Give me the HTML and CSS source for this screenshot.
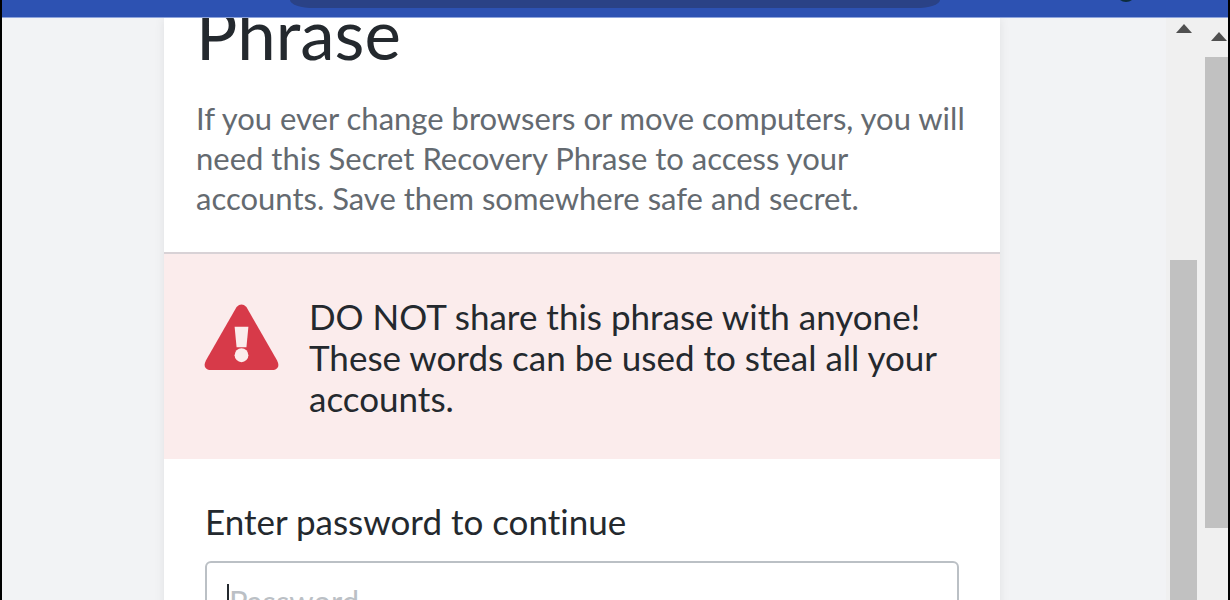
FILE: index.html
```html
<!DOCTYPE html>
<html lang="en">
<head>
<meta charset="utf-8">
<title>Secret Recovery Phrase</title>
<link rel="stylesheet" href="styles.css">
</head>
<body>
<div class="window">
  <header class="toolbar">
    <div class="address"></div>
    <div class="avatar"></div>
  </header>
  <div class="viewport">
    <main class="page">
      <section class="card">
        <div class="intro">
          <h1 class="title">Phrase</h1>
          <p class="lead">If you ever change browsers or move computers, you will<br>need this Secret Recovery Phrase to access your<br>accounts. Save them somewhere safe and secret.</p>
        </div>
        <div class="warning" role="alert">
          <svg class="warning-icon" viewBox="0 0 76 68" aria-hidden="true">
            <path d="M33 3Q38 -2 43 3L74 57Q78 65 71 67H5Q-2 65 2 57Z" fill="#d73a49"/>
            <path d="M31 23H45L43 44H33Z" fill="#fbecec"/>
            <circle cx="38" cy="52" r="7" fill="#fbecec"/>
          </svg>
          <p class="warning-text">DO NOT share this phrase with anyone!<br>These words can be used to steal all your<br>accounts.</p>
        </div>
        <form class="form">
          <label class="label" for="password">Enter password to continue</label>
          <div class="field">
            <input class="input" id="password" type="password" placeholder="Password">
            <span class="caret"></span>
          </div>
        </form>
      </section>
    </main>
    <div class="bar bar-inner">
      <svg class="arrow" viewBox="0 0 16 9" aria-hidden="true"><path d="M8 0L16 9H0Z" fill="#505050"/></svg>
      <div class="thumb"></div>
    </div>
    <div class="bar bar-outer">
      <svg class="arrow" viewBox="0 0 16 9" aria-hidden="true"><path d="M8 0L16 9H0Z" fill="#505050"/></svg>
      <div class="thumb"></div>
    </div>
  </div>
</div>
</body>
</html>
```
FILE: styles.css
```css
* { box-sizing: border-box; }
body {
  margin: 0;
  font-family: Lato, "Liberation Sans", sans-serif;
  font-variant-ligatures: none;
  color: #24292e;
}
.window {
  display: flex;
  flex-direction: column;
  height: 100vh;
  overflow: hidden;
  border: solid #000;
  border-width: 0 2px;
}
.toolbar {
  position: relative;
  flex: none;
  height: 18px;
  overflow: hidden;
  background: #2d52b2;
  border-bottom: 1px solid #8ea4dc;
}
.address {
  width: 53%;
  height: 8px;
  margin-left: 288px;
  background: #2a4286;
  border-radius: 0 0 24px 24px / 0 0 8px 8px;
}
.avatar {
  position: absolute;
  top: -18px;
  right: 92px;
  width: 20px;
  height: 20px;
  border-radius: 50%;
  background: #0c2c3c;
}
.viewport {
  display: flex;
  flex: 1;
  min-height: 0;
}
.page {
  flex: 1;
  padding: 0 166px 0 162px;
  background: #f2f3f5;
  overflow: hidden;
}
.card {
  min-height: 100%;
  background: #fff;
  box-shadow: 0 0 10px rgba(0, 0, 0, 0.08);
}
.intro {
  padding: 0 32px 34px;
  border-bottom: 2px solid #d8d2d6;
}
.title {
  margin: 0 0 48px;
  font-size: 69px;
  font-weight: 400;
  line-height: 32px;
}
.lead {
  margin: 0;
  color: #646a70;
  font-size: 31px;
  line-height: 40px;
  white-space: nowrap;
}
.warning {
  display: flex;
  align-items: flex-start;
  gap: 30px;
  padding: 42px 40px 40px;
  background: #fbecec;
}
.warning-icon {
  flex: none;
  width: 75px;
  height: 67px;
  margin-top: 8px;
}
.warning-text {
  margin: 0;
  font-size: 35px;
  line-height: 41px;
  white-space: nowrap;
}
.form {
  padding: 42px 41px 0;
}
.label {
  display: block;
  margin-bottom: 20px;
  font-size: 35px;
  line-height: 40px;
}
.field { position: relative; }
.input {
  display: block;
  width: 100%;
  height: 80px;
  padding: 0 22px;
  border: 2px solid #bbc0c5;
  border-radius: 6px;
  font: 31px Lato, "Liberation Sans", sans-serif;
}
.input::placeholder { color: #bbc0c5; opacity: 1; }
.caret {
  position: absolute;
  top: 23px;
  left: 22px;
  width: 2px;
  height: 34px;
  background: #24292e;
}
.bar {
  display: flex;
  flex: none;
  flex-direction: column;
  background: #f0f0f0;
}
.arrow {
  flex: none;
  width: 16px;
  height: 9px;
}
.thumb { background: #c1c1c1; }
.bar-inner {
  width: 37px;
  padding: 6px 6px 0 4px;
}
.bar-inner .arrow { margin: 0 0 227px 6px; }
.bar-inner .thumb { flex: 1; }
.bar-outer {
  width: 25px;
  padding: 14px 0 0 2px;
  overflow: hidden;
}
.bar-outer .arrow { margin: 0 0 16px 6px; }
.bar-outer .thumb { height: 83%; }
```
